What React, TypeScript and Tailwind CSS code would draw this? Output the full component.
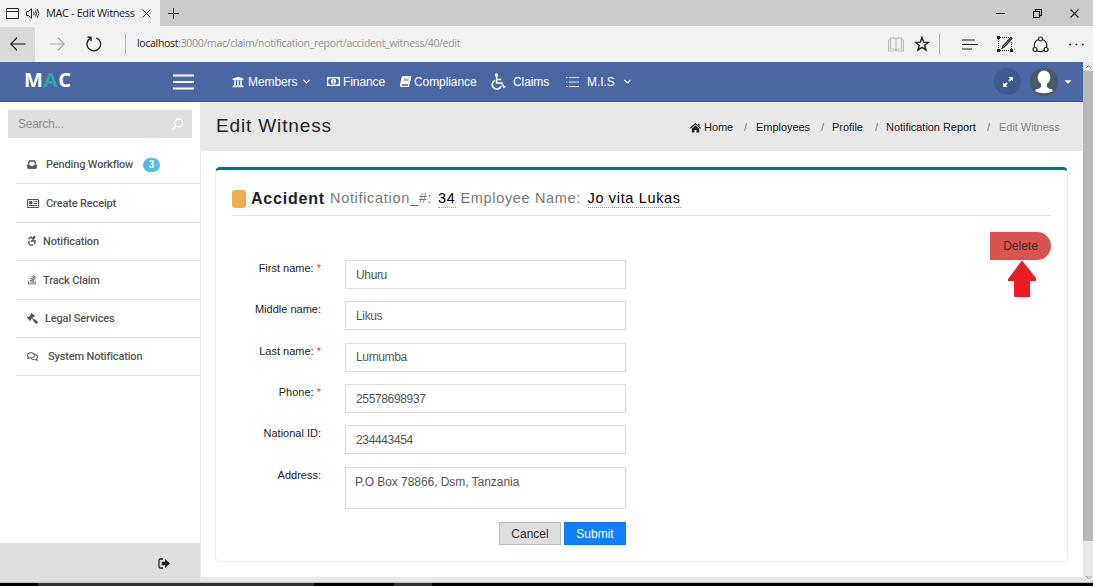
import React from "react";
import { FaUniversity, FaBook, FaStackOverflow, FaGavel, FaRegComments, FaCaretDown } from "react-icons/fa";
import { ChevronDown } from "lucide-react";

const InboxIcon = () => (
  <svg className="h-[9px] w-[10px]" viewBox="0 0 10 9">
    <path d="M2.400 1h5.200L9 5v3H1V5z" fill="none" stroke="currentColor" strokeWidth="1.300" />
    <path d="M.6 5h2.600l.7 1.300h2.200L6.800 5h2.600v3.400H.6z" fill="currentColor" />
  </svg>
);

const ReceiptIcon = () => (
  <svg className="h-[9px] w-[12px]" viewBox="0 0 12 9" fill="none" stroke="currentColor" strokeWidth="1">
    <path d="M.5.5h11v8H.5z" />
    <path d="M2 2.500h3M2 4.500h3M2 6.500h8M6.500 2.500h1M6.500 4.500h3.500M8.500 2.500H10" />
    <path d="M3 2.500h2v2H3z" fill="currentColor" />
  </svg>
);

const AccessibleIcon = () => (
  <svg className="size-[10px]" viewBox="0 0 16 16" fill="none" stroke="currentColor" strokeWidth="2">
    <circle cx="11.500" cy="2" r="2" fill="currentColor" stroke="none" />
    <path d="M2.500 4.500 6 2l4.500 2.500L7.500 8H13l-.8 5" strokeWidth="2.400" />
    <path d="M4 7.500a4.200 4.200 0 1 0 6 6" />
  </svg>
);

const WheelchairIcon = () => (
  <svg className="h-[17px] w-[15px]" viewBox="0 0 15 17" fill="none" stroke="currentColor" strokeWidth="1.500">
    <circle cx="5.500" cy="2" r="1.700" fill="currentColor" stroke="none" />
    <path d="M5.600 3v7h5.200l2 4.200 1.800-.9M5.600 6.500h4.600" />
    <path d="M4.200 7.200a4.600 4.600 0 1 0 6 5.800" />
  </svg>
);

const MoneyIcon = () => (
  <svg className="h-[9px] w-[13px]" viewBox="0 0 13 9">
    <path fill="currentColor" fillRule="evenodd" d="M0 0h13v9H0zM2.600 1.200A1.600 1.600 0 0 1 1.200 2.600v3.800a1.600 1.600 0 0 1 1.400 1.400h7.800a1.600 1.600 0 0 1 1.400-1.400V2.600a1.600 1.600 0 0 1-1.400-1.400z" />
    <ellipse cx="6.500" cy="4.500" rx="2.400" ry="2.900" fill="currentColor" />
    <path d="M5.800 3.400l.9-.6v3.200M5.600 6.200h2" stroke="#4c66a4" strokeWidth=".8" fill="none" />
  </svg>
);

const ListIcon = () => (
  <svg className="h-[10px] w-[13px]" viewBox="0 0 13 10" stroke="currentColor" strokeOpacity=".85">
    <path d="M0 .5h1.500M3 .5h10M0 5h1.500M3 5h10M0 9.500h1.500M3 9.500h10" />
  </svg>
);

const SignOutIcon = () => (
  <svg className="h-[11px] w-[13px]" viewBox="0 0 13 11">
    <path d="M5 1H2.300A1.300 1.300 0 0 0 1 2.300v6.400A1.300 1.300 0 0 0 2.300 10H5" fill="none" stroke="#222" strokeWidth="1.300" />
    <path d="M3.700 3.700H7V.9l5 4.600-5 4.600V7.300H3.700z" fill="#222" />
  </svg>
);

const HomeIcon = () => (
  <svg className="h-[10px] w-[11px]" viewBox="0 0 12 11">
    <path d="M.3 5.800 6 .8l5.700 5" fill="none" stroke="#222" strokeWidth="1.500" />
    <path d="M6 2.700 1.900 6.200V10.500h3V7.600h2.200v2.900h3V6.200zM8.800.8h1.700v2.800L8.800 2.200z" fill="#222" />
  </svg>
);

const menu = [
  { label: "Pending Workflow", icon: <InboxIcon />, slot: "w-[19px]", badge: "3" },
  { label: "Create Receipt", icon: <ReceiptIcon />, slot: "w-[19px]" },
  { label: "Notification", icon: <AccessibleIcon />, slot: "w-[16px]" },
  { label: "Track Claim", icon: <FaStackOverflow className="h-[11px] w-[10px]" />, slot: "w-[16px]" },
  { label: "Legal Services", icon: <FaGavel className="size-[11px] -scale-x-100" />, slot: "w-[18px]" },
  { label: "System Notification", icon: <FaRegComments className="size-[11px]" />, slot: "w-[21px]" },
];

const fields = [
  { label: "First name:", value: "Uhuru", required: true },
  { label: "Middle name:", value: "Likus", required: false },
  { label: "Last name:", value: "Lumumba", required: true },
  { label: "Phone:", value: "25578698937", required: true },
  { label: "National ID:", value: "234443454", required: false },
];

function BrowserChrome() {
  return (
    <header className="flex h-[62px] shrink-0 flex-col bg-[#f2f2f2] font-['Open_Sans','Noto_Sans',sans-serif] text-[#222]">
      <div className="flex h-[26px] bg-[#cbcbcb]">
        <div className="flex w-[160px] items-center bg-[#f2f2f2] pl-[6px]">
          <svg className="h-[11px] w-[13px]" viewBox="0 0 13 11" fill="none" stroke="#222"><path d="M.5.5h12v10H.5zM.5 3.500h12" /></svg>
          <svg className="ml-[7px] h-[11px] w-[14px]" viewBox="0 0 14 11" fill="none" stroke="#222"><path d="M.5 3.500h2l3-2.700v9.400l-3-2.700h-2zM7.700 3.700q1 1.800 0 3.600M9.500 2.400q2 3.100 0 6.200M11.300 1.200q3 4.300 0 8.600" /></svg>
          <span className="ml-[6px] w-[90px] whitespace-nowrap text-[11px] tracking-[-0.400px]">MAC - Edit Witness</span>
          <svg className="ml-[6px] size-[9px]" viewBox="0 0 9 9" stroke="#333"><path d="M.5.5l8 8M8.500.5l-8 8" /></svg>
        </div>
        <svg className="mt-[8px] ml-[8px] size-[11px]" viewBox="0 0 11 11" stroke="#333"><path d="M5.500 0v11M0 5.500h11" /></svg>
        <div className="mr-[14px] ml-auto flex items-center gap-[28px]">
          <svg className="h-[9px] w-[9px]" viewBox="0 0 9 9" stroke="#222"><path d="M0 4.500h9" /></svg>
          <svg className="size-[9px]" viewBox="0 0 9 9" fill="none" stroke="#111"><path d="M.5 2.500h6v6h-6zM2.500 2.500v-2h6v6h-2" strokeWidth="1.200" /></svg>
          <svg className="size-[9px]" viewBox="0 0 9 9" stroke="#222"><path d="M.5.5l8 8M8.500.5l-8 8" strokeWidth="1.200" /></svg>
        </div>
      </div>
      <div className="flex h-[36px] items-center">
        <div className="flex h-[35px] w-[35px] items-center justify-center bg-[#dadada]">
          <svg className="h-[14px] w-[16px]" viewBox="0 0 16 14" fill="none" stroke="#111" strokeWidth="1.200"><path d="M15.500 7H1M7 .7.8 7 7 13.300" /></svg>
        </div>
        <svg className="ml-[14px] h-[14px] w-[16px]" viewBox="0 0 16 14" fill="none" stroke="#aaa" strokeWidth="1.200"><path d="M.5 7H15M9 .7 15.200 7 9 13.300" /></svg>
        <svg className="ml-[21px] size-[16px]" viewBox="0 0 16 16" fill="none" stroke="#222" strokeWidth="1.400"><path d="M10.500 1.800A6.800 6.800 0 1 1 4 2.400M1.600 1.300H5v3.800" /></svg>
        <div className="ml-[23px] h-[20px] w-px bg-[#b7b7b7]" />
        <span className="ml-[11px] whitespace-nowrap text-[10.500px] tracking-[-0.310px] text-[#949494]"><span className="text-[#222]">localhost</span>:3000/mac/claim/notification_report/accident_witness/40/edit</span>
        <div className="mr-[9px] ml-auto flex items-center">
          <svg className="h-[15px] w-[16px]" viewBox="0 0 16 15" fill="none" stroke="#bdbdbd" strokeWidth="1.200"><path d="M8 2v11M2.500 1h4L8 2l1.500-1h4v11h-4L8 13l-1.500-1h-4zM2.500 3H.6v11h14.800V3h-1.900" /></svg>
          <svg className="ml-[10px] size-[16px]" viewBox="0 0 16 16" fill="none" stroke="#222" strokeWidth="1.400"><path d="M8 1.500 9.700 6.100l4.700.2-3.700 3 1.300 4.700L8 11.300 4 14l1.300-4.700-3.700-3 4.700-.2z" /></svg>
          <div className="ml-[9px] h-[20px] w-px bg-[#b0b0b0]" />
          <svg className="ml-[22px] h-[11px] w-[16px]" viewBox="0 0 16 11" stroke="#222" strokeWidth="1.200"><path d="M0 1h13M0 5.500h16M0 10h10" /></svg>
          <svg className="ml-[19px] size-[16px]" viewBox="0 0 16 16" fill="none" stroke="#222"><path d="M3 1.500h10M1.500 3v10M14.500 6v7M3 14.500h10" strokeDasharray="1 1" /><path d="M0 0h3v3H0zM0 13h3v3H0zM13 13h3v3h-3z" fill="#222" stroke="none" /><path d="M6 10 5 12l2-.8 8-8.700-1.200-1.200z" strokeWidth="1.200" /></svg>
          <svg className="ml-[19px] size-[17px]" viewBox="0 0 17 17" fill="none" stroke="#222" strokeWidth="1.200"><circle cx="8.500" cy="3" r="2" /><circle cx="3" cy="13.500" r="2" /><circle cx="14" cy="13.500" r="2" /><path d="M6.500 3.500C3 4.500 1.700 8.500 2.500 11.500M10.500 3.500C14 4.500 15.300 8.500 14.500 11.500M5 14.800q3.500 1.600 7 0" /></svg>
          <svg className="ml-[20px] h-[3px] w-[15px]" viewBox="0 0 15 3" fill="#222"><circle cx="1.200" cy="1.500" r="1" /><circle cx="7.500" cy="1.500" r="1" /><circle cx="13.800" cy="1.500" r="1" /></svg>
        </div>
      </div>
    </header>
  );
}

function NavBar() {
  return (
    <nav className="flex h-[40px] shrink-0 items-center border-b border-[#3a5599] bg-[#4c66a4] text-[12px] tracking-[-0.080px] text-white">
      <div className="-mt-[4px] ml-[24px] w-[50px] font-['Open_Sans',sans-serif] text-[20px] leading-none font-bold tracking-[0.800px]">M<span className="text-[#30a5a8]">A</span>C</div>
      <svg className="ml-[99px] h-[16px] w-[21px]" viewBox="0 0 21 16" stroke="white" strokeWidth="1.800"><path d="M0 1.500h21M0 8h21M0 14.500h21" /></svg>
      <div className="ml-[38px] flex w-[95px] items-center gap-[4px]"><FaUniversity className="size-[12px]" /><span className="w-[49px]">Members</span><ChevronDown className="size-[11px]" strokeWidth={2.500} /></div>
      <div className="flex w-[73px] items-center gap-[3px]"><MoneyIcon /><span>Finance</span></div>
      <div className="flex w-[91px] items-center gap-[3px]"><FaBook className="h-[11px] w-[11px] -skew-x-12" /><span>Compliance</span></div>
      <div className="flex w-[75px] items-center gap-[7px]"><WheelchairIcon /><span>Claims</span></div>
      <div className="flex items-center"><ListIcon /><span className="ml-[8px] w-[35px]">M.I.S</span><ChevronDown className="size-[11px]" strokeWidth={2.500} /></div>
      <div className="mr-[11px] ml-auto flex items-center">
        <div className="flex size-[27px] items-center justify-center rounded-full bg-[#415991]">
          <svg className="size-[10px]" viewBox="0 0 10 10" fill="white"><path d="M5.500 0H10v4.500L8.400 2.900 6.500 4.800 5.200 3.500 7.100 1.600zM4.500 10H0V5.500l1.600 1.600 1.900-1.900 1.300 1.300-1.900 1.900z" /></svg>
        </div>
        <svg className="ml-[9px] size-[28px]" viewBox="0 0 28 28"><circle cx="14" cy="14" r="14" fill="#4a5868" /><ellipse cx="14" cy="9.500" rx="6.300" ry="7" fill="white" /><path d="M11 14h6v5q1 1.500 5.500 2.500v2q-4 1.800-8.500 1.800T5.500 23.500v-2Q10 20.500 11 19z" fill="white" /></svg>
        <FaCaretDown className="ml-[6px] h-[11px] w-[8px]" />
      </div>
    </nav>
  );
}

function Sidebar() {
  return (
    <aside className="flex w-[201px] shrink-0 flex-col border-r border-[#e9e9e9] bg-white text-[#555]">
      <div className="mt-[8px] ml-[8px] flex h-[28px] w-[184px] items-center bg-[#dedede] pl-[10px] text-[12px] text-[#929292]">
        <span className="w-[153px] tracking-[-0.250px]">Search...</span>
        <svg className="size-[13px]" viewBox="0 0 13 13" fill="none" stroke="white" strokeWidth="1.300"><circle cx="7.700" cy="5" r="4" /><path d="M5 8 1 12" /></svg>
      </div>
      <ul className="mt-[8px] ml-[16px] flex flex-col text-[11px] font-medium">
        {menu.map((item) => (
          <li key={item.label} className="flex h-[38.400px] items-center border-b border-[#dfdfea] pl-[11px]">
            <span className={`shrink-0 ${item.slot}`}>{item.icon}</span>
            <span className="mt-[2px] font-[Roboto] tracking-[-0.150px] whitespace-nowrap">{item.label}</span>
            {item.badge && <span className="ml-[10px] flex h-[14px] w-[17px] items-center justify-center rounded-full bg-[#55bde0] text-[10px] font-bold text-white">{item.badge}</span>}
          </li>
        ))}
      </ul>
      <div className="mt-auto flex h-[39px] items-center bg-[#dedede] pt-[2px] pl-[158px]"><SignOutIcon /></div>
    </aside>
  );
}

function WitnessForm() {
  return (
    <form className="flex w-[394px] flex-col" onSubmit={(e) => e.preventDefault()}>
      {fields.map((f) => (
        <div key={f.label} className="flex h-[41.300px]">
          <label className="mt-[1px] w-[89px] text-right text-[11px] leading-[14px] whitespace-nowrap text-[#222]">
            {f.label}{f.required && <span className="text-red-500"> *</span>}
          </label>
          <div className="ml-[24px] flex h-[29px] w-[281px] items-center border border-[#d9d9d9] px-[10px] text-[12px] tracking-[-0.350px] text-[#555]">{f.value}</div>
        </div>
      ))}
      <div className="flex">
        <label className="mt-[1px] w-[89px] text-right text-[11px] leading-[14px] text-[#222]">Address:</label>
        <div className="ml-[24px] h-[42px] w-[281px] border border-[#d9d9d9] px-[9px] pt-[7px] text-[12px] leading-[14px] tracking-[-0.050px] text-[#555]">P.O Box 78866, Dsm, Tanzania</div>
      </div>
      <div className="mt-[13.400px] flex justify-end gap-[3px] text-[12px]">
        <button className="h-[23px] w-[62px] border border-[#bdb9c4] bg-[#dedede] text-[#333]">Cancel</button>
        <button className="h-[23px] w-[62px] border border-[#0878f8] bg-[#0f80f8] text-white">Submit</button>
      </div>
    </form>
  );
}

export default function App() {
  return (
    <div className="flex h-[586px] w-[1093px] flex-col overflow-hidden bg-white font-['Liberation_Sans',sans-serif]">
      <BrowserChrome />
      <div className="flex h-[520px] shrink-0">
        <div className="flex w-[1083px] flex-col">
          <NavBar />
          <div className="flex min-h-0 grow">
            <Sidebar />
            <main className="flex min-w-0 grow flex-col">
              <div className="flex h-[49px] items-center bg-[#e8e8e8] pr-[24px] pl-[15px]">
                <h1 className="text-[19px] tracking-[0.860px] text-[#222]">Edit Witness</h1>
                <div className="ml-auto flex items-center pt-[2px] text-[11px] tracking-[-0.040px] text-[#222]">
                  <HomeIcon />
                  <span className="ml-[3px] w-[40px]">Home</span><span className="w-[12px] text-[#777]">/</span>
                  <span className="w-[65px]">Employees</span><span className="w-[11px] text-[#777]">/</span>
                  <span className="w-[43px]">Profile</span><span className="w-[11px] text-[#777]">/</span>
                  <span className="w-[101px] whitespace-nowrap">Notification Report</span><span className="w-[12px] text-[#777]">/</span>
                  <span className="w-[60px] whitespace-nowrap text-[#7e858a]">Edit Witness</span>
                </div>
              </div>
              <section className="mt-[16px] ml-[14px] h-[395px] w-[853px] rounded-[5px] border border-t-[3px] border-[#ebebeb] border-t-[#00757e] px-[16px]">
                <div className="flex h-[46px] items-center border-b border-[#dedede] pt-[12px] text-[14.500px] whitespace-nowrap text-[#777]">
                  <span className="mt-[1px] mr-[5px] h-[18px] w-[14px] rounded-[3px] bg-[#f0ad4e]" />
                  <strong className="w-[79px] text-[16px] tracking-[0.800px] text-[#222]">Accident</strong>
                  <span className="w-[108px] tracking-[0.680px]">Notification_#:</span>
                  <span className="mr-[5px] border-b border-dotted border-[#999] leading-[18px] tracking-[0.700px] text-black">34</span>
                  <span className="w-[127px] tracking-[0.660px]">Employee Name:</span>
                  <span className="border-b border-dotted border-[#999] leading-[18px] tracking-[0.660px] text-black">Jo vita Lukas</span>
                </div>
                <div className="flex pt-[16px]">
                  <div className="mt-[28.200px]"><WitnessForm /></div>
                  <div className="ml-auto flex flex-col items-end">
                    <button className="h-[28px] w-[61px] rounded-r-full bg-[#d9534f] text-[12px] text-[#333]">Delete</button>
                    <svg className="mt-[1px] mr-[15px] h-[36px] w-[28px]" viewBox="0 0 28 36"><path d="M13.500 0h1L28 17v3h-6v16H7l-1-1V20H0v-2z" fill="#ed1c24" /></svg>
                  </div>
                </div>
              </section>
              <div className="mt-auto h-[5px] bg-[#e8e8e8]" />
            </main>
          </div>
        </div>
        <div className="flex w-[10px] flex-col items-center bg-[#e8e8e8]">
          <svg className="h-[9px] w-[7px]" viewBox="0 0 7 9" fill="none" stroke="#777"><path d="M1 6l2.500-2.500L6 6" /></svg>
          <div className="h-[470px] w-full bg-[#b8b8b8]" />
          <svg className="mt-auto mb-[1px] h-[7px] w-[7px]" viewBox="0 0 7 7" fill="none" stroke="#888"><path d="M1 2l2.500 2.500L6 2" /></svg>
        </div>
      </div>
      <div className="flex h-[4px] shrink-0 border-t border-[#bbb] bg-black">
        <div className="ml-[38px] w-[276px] bg-[#333]" /><div className="ml-[80px] w-[38px] bg-[#333]" />
      </div>
    </div>
  );
}
